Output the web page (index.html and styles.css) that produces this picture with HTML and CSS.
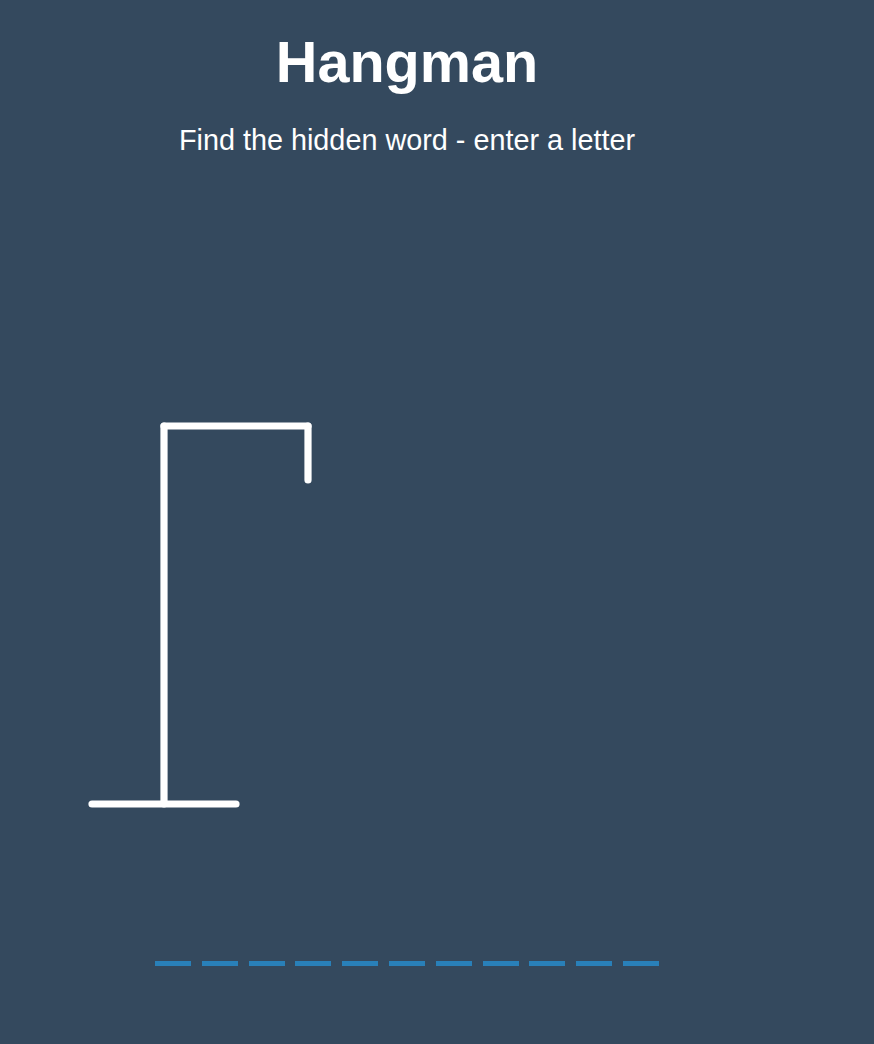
FILE: index.html
```html
<!DOCTYPE html>
<html lang="en">
<head>
<meta charset="UTF-8">
<title>Hangman</title>
<link rel="stylesheet" href="styles.css">
</head>
<body>
  <div class="page">
    <h1 class="title">Hangman</h1>
    <p class="subtitle">Find the hidden word - enter a letter</p>
    <div class="game">
      <svg class="figure" width="360" height="450" viewBox="0 0 200 250">
        <line x1="60" y1="20" x2="140" y2="20" />
        <line x1="140" y1="20" x2="140" y2="50" />
        <line x1="60" y1="20" x2="60" y2="230" />
        <line x1="20" y1="230" x2="100" y2="230" />
      </svg>
      <div class="word">
        <span class="letter"></span>
        <span class="letter"></span>
        <span class="letter"></span>
        <span class="letter"></span>
        <span class="letter"></span>
        <span class="letter"></span>
        <span class="letter"></span>
        <span class="letter"></span>
        <span class="letter"></span>
        <span class="letter"></span>
        <span class="letter"></span>
      </div>
    </div>
  </div>
</body>
</html>
```

FILE: styles.css
```css
html, body {
  margin: 0;
  padding: 0;
}

body {
  background-color: #34495e;
  color: #ffffff;
  font-family: "Liberation Sans", Arial, Helvetica, sans-serif;
  height: 1044px;
  overflow: hidden;
}

.page {
  width: 814px;
  display: flex;
  flex-direction: column;
  align-items: center;
}

.title {
  margin: 29px 0 0;
  font-size: 57.6px;
  line-height: 66px;
  font-weight: bold;
}

.subtitle {
  margin: 28px 0 0;
  font-size: 28.8px;
  line-height: 34px;
}

.game {
  align-self: stretch;
  display: flex;
  flex-direction: column;
  margin-top: 233px;
}

.figure {
  display: block;
  margin-left: 56px;
  fill: transparent;
  stroke: #ffffff;
  stroke-width: 4px;
  stroke-linecap: round;
}

.word {
  display: flex;
  justify-content: center;
  margin-top: 36px;
}

.letter {
  display: inline-flex;
  box-sizing: border-box;
  width: 36px;
  height: 90px;
  margin: 0 5.4px;
  border-bottom: 5.4px solid #2980b9;
  font-size: 54px;
  align-items: center;
  justify-content: center;
}
```
